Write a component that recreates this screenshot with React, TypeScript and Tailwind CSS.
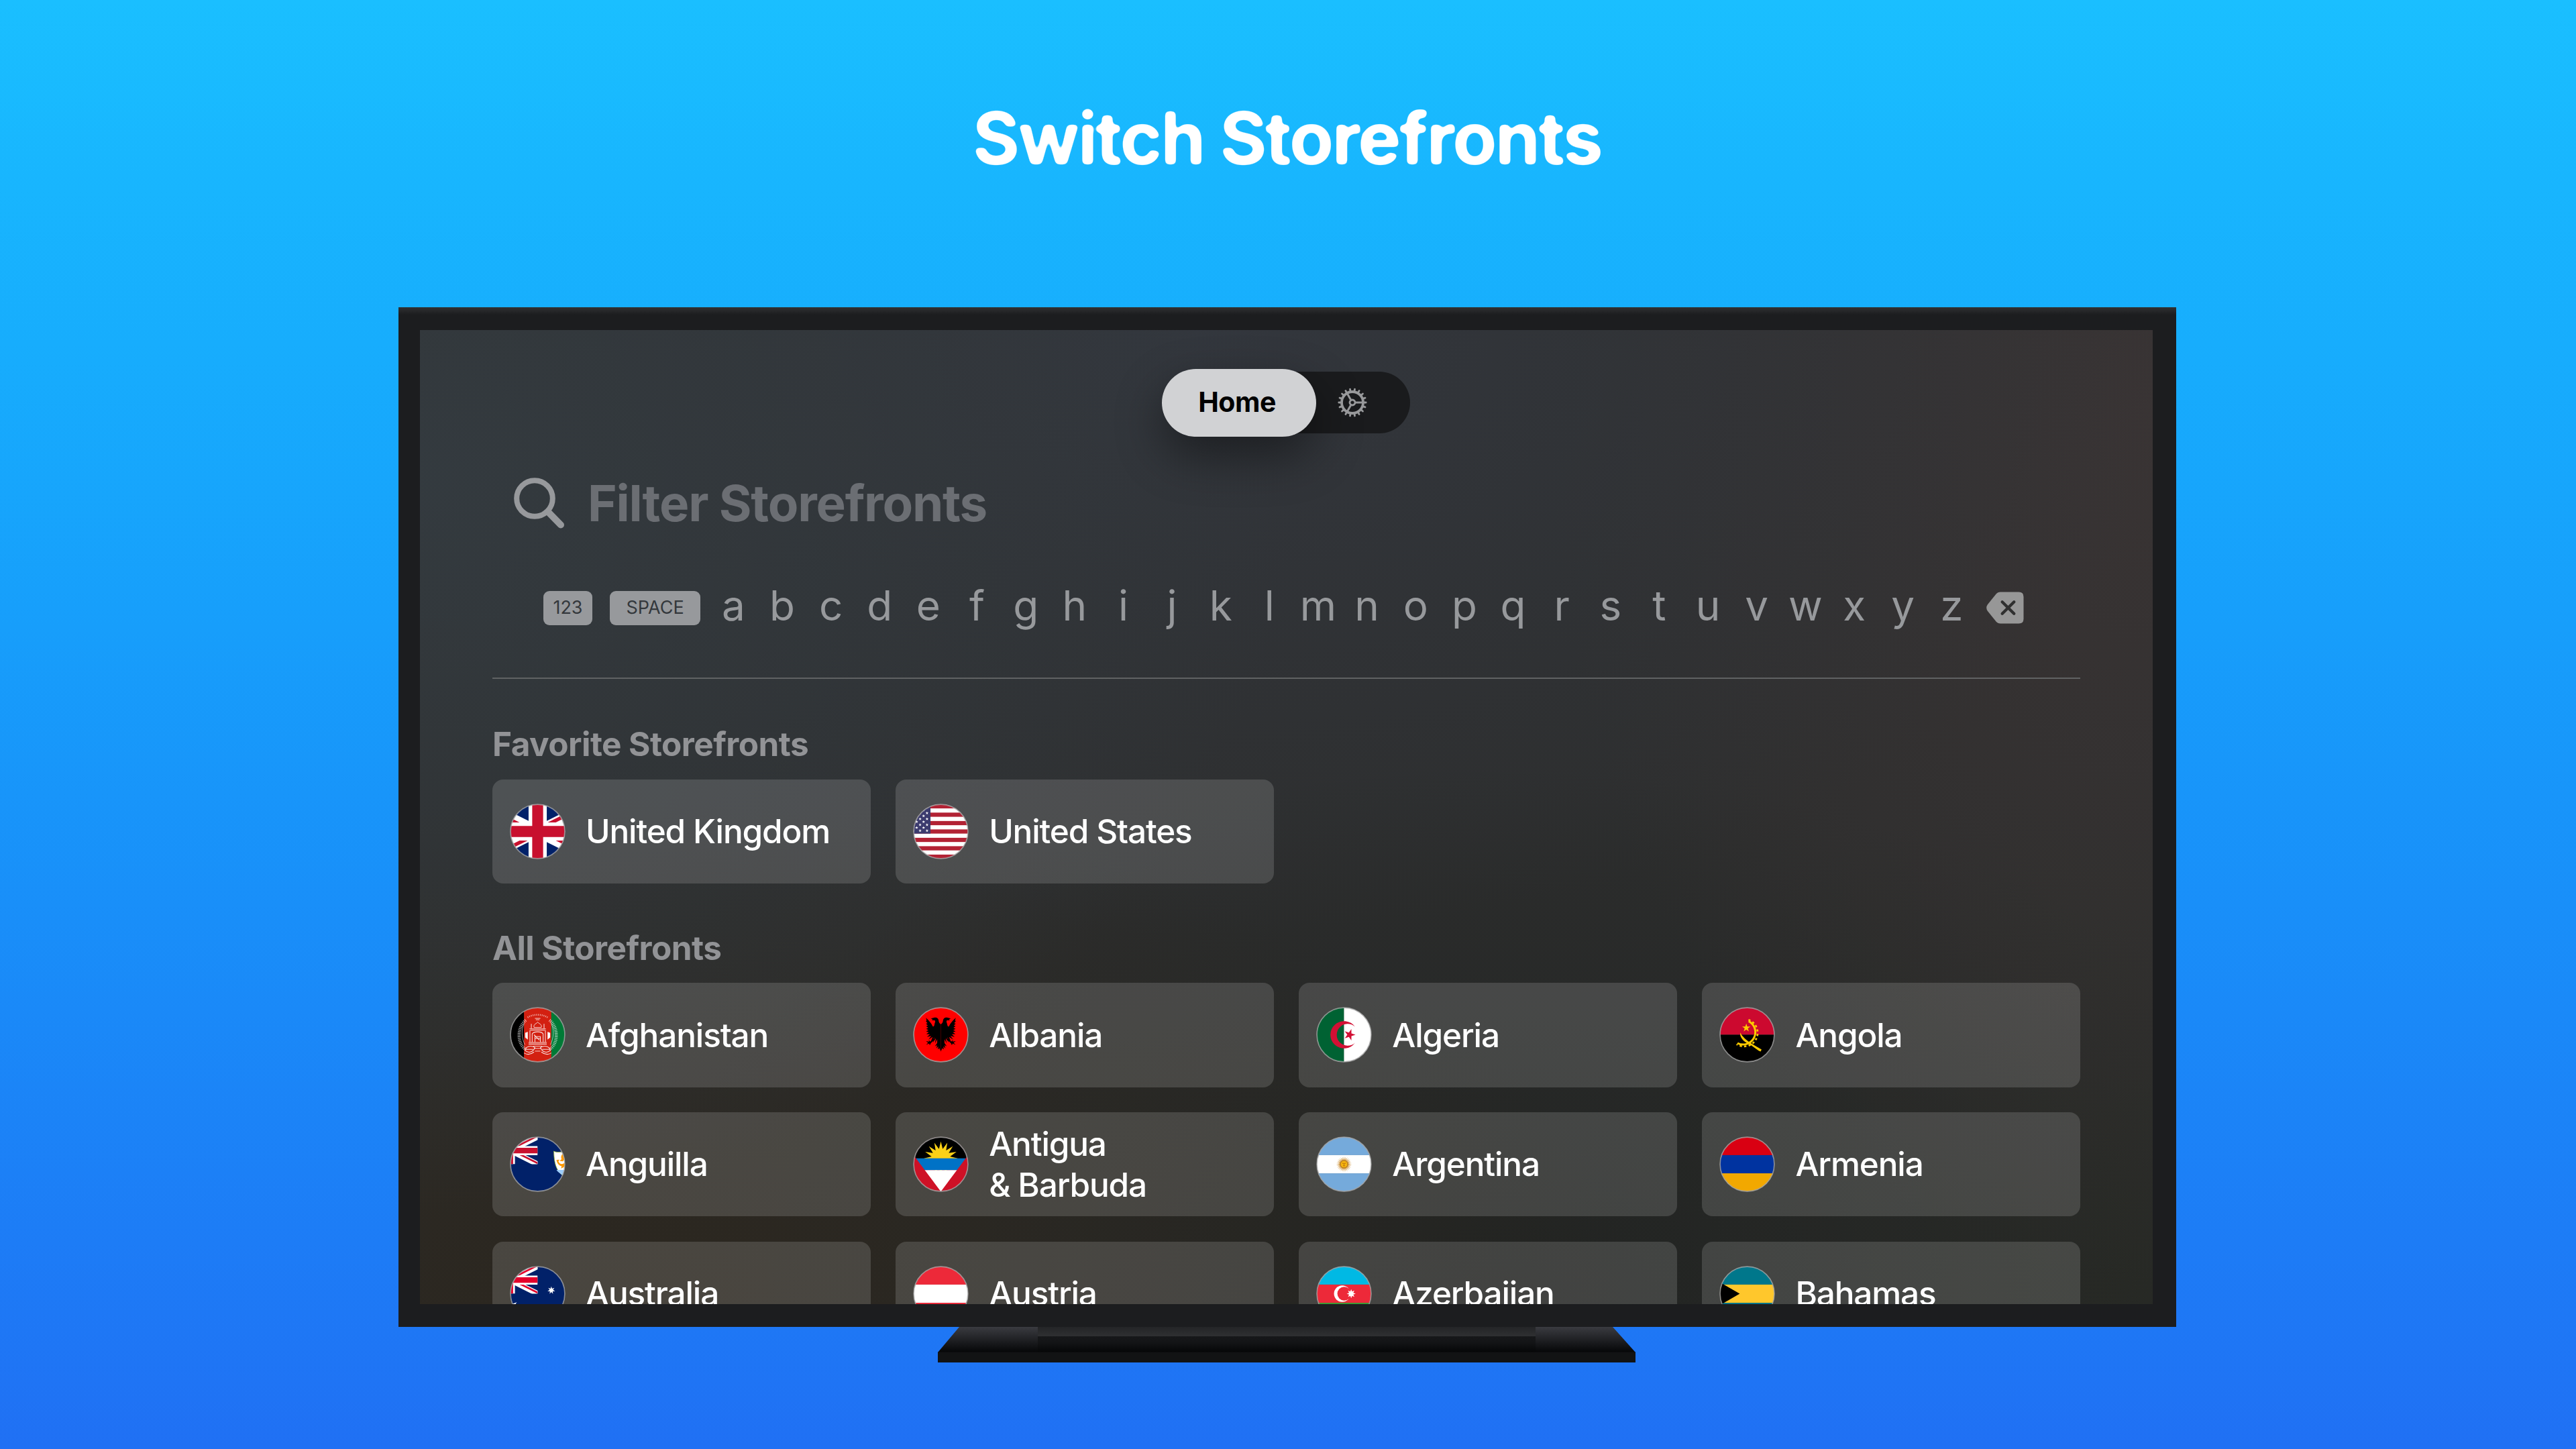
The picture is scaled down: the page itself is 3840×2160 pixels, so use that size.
import React from "react";

/* ---------- geometry helpers ---------- */

function starPoints(cx: number, cy: number, outer: number, inner: number, count: number, startDeg = -90) {
  const pts: string[] = [];
  for (let i = 0; i < count * 2; i++) {
    const r = i % 2 === 0 ? outer : inner;
    const a = ((startDeg + (i * 180) / count) * Math.PI) / 180;
    pts.push(`${(cx + r * Math.cos(a)).toFixed(2)},${(cy + r * Math.sin(a)).toFixed(2)}`);
  }
  return pts.join(" ");
}

const range = (n: number) => Array.from({ length: n }, (_, i) => i);

/* ---------- flags, drawn on a -30..30 square ---------- */

function UnionJack({ x, y, w, id, red = "#C8102E" }: { x: number; y: number; w: number; id: string; red?: string }) {
  return (
    <svg x={x} y={y} width={w} height={w / 2} viewBox="0 0 60 30">
      <clipPath id={id}>
        <path d="M30 15h30v15zv15H0zH0V0zV0h30z" />
      </clipPath>
      <path d="M0 0h60v30H0z" fill="#012169" />
      <path d="M0 0l60 30M60 0L0 30" stroke="#fff" strokeWidth="6" />
      <path d="M0 0l60 30M60 0L0 30" clipPath={`url(#${id})`} stroke={red} strokeWidth="4" />
      <path d="M30 0v30M0 15h60" stroke="#fff" strokeWidth="10" />
      <path d="M30 0v30M0 15h60" stroke={red} strokeWidth="6" />
    </svg>
  );
}

function Bands({ colors }: { colors: [string, string, string] }) {
  return (
    <>
      <rect x="-30" y="-30" width="60" height="20" fill={colors[0]} />
      <rect x="-30" y="-10" width="60" height="20" fill={colors[1]} />
      <rect x="-30" y="10" width="60" height="20" fill={colors[2]} />
    </>
  );
}

function UnitedStates() {
  const s = 60 / 13;
  return (
    <>
      <rect x="-30" y="-30" width="60" height="60" fill="#fff" />
      {range(7).map((i) => (
        <rect key={i} x="-30" y={-30 + i * 2 * s} width="60" height={s} fill="#B22234" />
      ))}
      <rect x="-57" y="-30" width="45.6" height={7 * s} fill="#3C3B6E" />
      {range(9).map((row) =>
        range(6).map((c) => {
          const x = -57 + 3.8 + c * 7.6 + (row % 2 ? 3.8 : 0);
          if (x > -13) return null;
          return <polygon key={`${row}-${c}`} points={starPoints(x, -30 + 3.23 * (row + 1), 1.75, 0.7, 5)} fill="#fff" />;
        })
      )}
    </>
  );
}

function Afghanistan() {
  return (
    <>
      <rect x="-30" y="-30" width="15" height="60" fill="#000" />
      <rect x="-15" y="-30" width="30" height="60" fill="#D32011" />
      <rect x="15" y="-30" width="15" height="60" fill="#007A36" />
      <g fill="none" stroke="#fff" strokeOpacity="0.85">
        {[-1, 1].map((d) => (
          <g key={d} transform={`scale(${d} 1)`}>
            <path d="M13 -16C19 -11 21.5 -3 20 5C19 10 16.5 14 13 16" strokeWidth="3.4" strokeDasharray="0.9 0.9" strokeOpacity="0.6" />
            <path d="M15 -12C18 -6 18 3 14 11" strokeWidth="0.5" />
            <path d="M3 14C8 11 13 13 14 17C10 21 5 19 3 14ZM4 19C8 22 12 22 15 20M5 16h8" strokeWidth="0.8" />
            <path d="M11 -3l2.6 1v5l-2.6 2z" fill="#fff" strokeWidth="0.4" />
          </g>
        ))}
        <path d="M-11 -19C-5 -23 5 -23 11 -19" strokeWidth="1.8" strokeDasharray="0.9 1.1" strokeOpacity="0.6" />
        <path d="M-3 -18h6M-2 -16.5h4" strokeWidth="0.7" />
        <path d="M-4 -8C-5 -12 -1 -12 0 -14C1 -12 5 -12 4 -8Z" strokeWidth="0.7" />
        <path
          d="M-7 -12v5M7 -12v5M-9 -6.5H9M-8 -5H8M-8.5 -5V8M8.5 -5V8M-6 8V-1C-4 -4 4 -4 6 -1V8M-10 8.5H10M-10 10.2H10M-3 8V2H3V8M-4 0l6 6M-3 4h6"
          strokeWidth="0.8"
        />
        <path d="M-5 12.5H5M-4 15H4M-3 18H3" strokeWidth="0.7" />
      </g>
    </>
  );
}

function Albania() {
  return (
    <>
      <rect x="-30" y="-30" width="60" height="60" fill="#FF0000" />
      {[-1, 1].map((d) => (
        <g key={d} transform={`scale(${d} 1)`} fill="#000">
          <path d="M0 -11.5C1.6 -12.4 2.4 -14 2.4 -15.6C2.6 -18.4 5 -19.6 7.4 -18.8L11 -17.8L9 -16.9L9.8 -15.8L6.8 -15.9C5.4 -14.6 6.8 -13.3 7 -11.4C7.2 -9.6 7.8 -8.8 9 -9.2C10 -12 12.5 -15 16.4 -18.6L15.6 -15.6L16.5 -15L14.6 -12.8L16.4 -12.2L14.2 -10.2L16.3 -9.4L13.8 -7.7L16.2 -6.5L13.6 -5.2L16.2 -3.6L13.2 -2.7L16 -0.7L12 -0.6L15.2 2.4L10.6 1.2L13.6 5.4L9 2.4L11 7.2L7.2 3L8.8 8.6L5.4 3.6L6.4 9.4L4 5L4 9L6.5 12.8L4 11.4L5 15L2.8 12.8L3.2 16L1.6 14.8L0 18.4Z" />
          <path d="M8 3.6L11.4 7.6L13.4 5.8L12.8 7.6L16.4 7L14 8.8L16.2 11L12.8 9.6L12.2 11.6L11 9.2L7 5.6Z" />
        </g>
      ))}
    </>
  );
}

function Algeria() {
  return (
    <>
      <rect x="-30" y="-30" width="30" height="60" fill="#006233" />
      <rect x="0" y="-30" width="30" height="60" fill="#fff" />
      <path d="M12.13 -8.83A15 15 0 1 0 12.13 8.83A12 12 0 1 1 12.13 -8.83Z" fill="#D21034" />
      <polygon points={starPoints(6.1, 0, 6.5, 2.5, 5, 0)} fill="#D21034" />
    </>
  );
}

function Angola() {
  return (
    <>
      <rect x="-30" y="-30" width="60" height="30" fill="#CC092F" />
      <rect x="-30" y="0" width="60" height="30" fill="#000" />
      <polygon points={starPoints(-1, -7.6, 4.8, 1.85, 5)} fill="#FFCB00" />
      <path d="M1.6 -14.8A13.4 13.4 0 1 1 -10.6 9.2" fill="none" stroke="#FFCB00" strokeWidth="2.2" />
      <path d="M1.4 -16.4A15 15 0 1 1 -11.6 10.4" fill="none" stroke="#FFCB00" strokeWidth="2" strokeDasharray="2.4 2.5" />
      <path d="M-7.6 -2.4C-5.4 2.2 -1 5.6 2.4 8.2L6.4 10.6L15.8 16.2L14.8 18.4L12.6 17.6L4.4 11.6L1 9.8C-4 7.4 -8.6 2.6 -7.6 -2.4Z" fill="#FFCB00" />
    </>
  );
}

function Anguilla() {
  return (
    <>
      <rect x="-30" y="-30" width="60" height="60" fill="#012169" />
      <UnionJack x={-60} y={-30} w={60} id="uj-anguilla" />
      <path d="M17.8 -14.4C20 -13 24 -12.8 30 -14.4V14C22 9 18 2 17.8 -14.4Z" fill="#fff" stroke="#A8C23A" strokeWidth="0.6" />
      <path d="M20.6 6.2H30V13.6C25.6 11 22.6 9 20.6 6.2Z" fill="#9CCDFB" />
      <path d="M28.6 -12.5C25.4 -10 25.6 -7.6 26.2 -5.6L24.2 -3.6L27.6 -3.2L30 -6V-11Z" fill="#FF9900" />
      <path d="M20.6 -4.8C21.4 -1 23 1.4 26.4 2.2L25.6 4.6L28.6 3.4L30 1V-2C27.5 1 24 -0.2 22.8 -3.2L24 -5Z" fill="#FF9900" />
    </>
  );
}

function Antigua() {
  return (
    <>
      <rect x="-30" y="-30" width="60" height="60" fill="#CE1126" />
      <clipPath id="antigua-v">
        <path d="M-45 -30H45L0 30Z" />
      </clipPath>
      <g clipPath="url(#antigua-v)">
        <rect x="-45" y="-30" width="90" height="24" fill="#000" />
        <polygon points={starPoints(0, -6.5, 18.6, 10.4, 16)} fill="#FCD116" />
        <rect x="-45" y="-6.5" width="90" height="13" fill="#0072C6" />
        <rect x="-45" y="6.5" width="90" height="24" fill="#fff" />
      </g>
    </>
  );
}

function Argentina() {
  return (
    <>
      <Bands colors={["#75AADB", "#fff", "#75AADB"]} />
      <polygon points={starPoints(0, 0, 8.6, 4.6, 28)} fill="#D29B48" />
      <circle r="4" fill="#F6B40E" stroke="#A9701F" strokeWidth="0.7" />
      <path d="M-1.8 -1h1.2M0.6 -1h1.2M0 -0.8v1.4M-1 1.7h2" stroke="#85340A" strokeWidth="0.5" />
    </>
  );
}

function Australia() {
  return (
    <>
      <rect x="-30" y="-30" width="60" height="60" fill="#012169" />
      <UnionJack x={-60} y={-30} w={60} id="uj-australia" red="#E4002B" />
      <polygon points={starPoints(15, -3.75, 4.3, 1.9, 7)} fill="#fff" />
      <polygon points={starPoints(-30, 15, 9, 4, 7)} fill="#fff" />
    </>
  );
}

function Azerbaijan() {
  return (
    <>
      <Bands colors={["#00B9E4", "#ED2939", "#3F9C35"]} />
      <circle cx="-2" r="9" fill="#fff" />
      <circle cx="0.2" r="7.5" fill="#ED2939" />
      <polygon points={starPoints(7.9, 0, 4.9, 2.5, 8)} fill="#fff" />
    </>
  );
}

function Bahamas() {
  return (
    <>
      <Bands colors={["#00778B", "#FFC72C", "#00778B"]} />
      <path d="M-60 -30L-8.2 0L-60 30Z" fill="#000" />
    </>
  );
}

const flags: Record<string, React.ReactNode> = {
  gb: <UnionJack x={-60} y={-30} w={120} id="uj-gb" />,
  us: <UnitedStates />,
  af: <Afghanistan />,
  al: <Albania />,
  dz: <Algeria />,
  ao: <Angola />,
  ai: <Anguilla />,
  ag: <Antigua />,
  ar: <Argentina />,
  am: <Bands colors={["#D90012", "#0033A0", "#F2A800"]} />,
  au: <Australia />,
  at: <Bands colors={["#ED2939", "#fff", "#ED2939"]} />,
  az: <Azerbaijan />,
  bs: <Bahamas />,
};

function Flag({ code }: { code: string }) {
  return (
    <svg viewBox="-30.6 -30.6 61.2 61.2" className="size-[83px] shrink-0">
      <clipPath id={`round-${code}`}>
        <circle r="30" />
      </clipPath>
      <g clipPath={`url(#round-${code})`}>{flags[code]}</g>
      <circle r="29.8" fill="none" stroke="#a5a5a5" strokeOpacity="0.8" strokeWidth="1.2" />
    </svg>
  );
}

/* ---------- icons ---------- */

function GearIcon() {
  return (
    <svg viewBox="-22 -22 44 44" className="size-[44px]" fill="none" stroke="#98999b">
      <circle r="16" strokeWidth="3.8" />
      {range(18).map((i) => (
        <path key={i} d="M17 0H20.2" strokeWidth="2.8" strokeLinecap="round" transform={`rotate(${i * 20})`} />
      ))}
      <circle r="4" strokeWidth="2.8" />
      {[0, 120, 240].map((a) => (
        <path key={a} d="M5 0H15" strokeWidth="3" transform={`rotate(${a})`} />
      ))}
    </svg>
  );
}

function SearchIcon() {
  return (
    <svg viewBox="0 0 76 76" className="size-[76px]" fill="none" stroke="#97999c">
      <circle cx="31" cy="31" r="26.8" strokeWidth="8" />
      <path d="M51 51L70 70.5" strokeWidth="10" strokeLinecap="round" />
    </svg>
  );
}

function DeleteIcon() {
  return (
    <svg viewBox="0 0 56 48" className="h-[48px] w-[56px]">
      <path
        d="M21 0.5H48.5Q55.5 0.5 55.5 7.5V40.5Q55.5 47.5 48.5 47.5H21Q17 47.5 14.5 44.5L2 29Q-1.6 24 2 19L14.5 3.5Q17 0.5 21 0.5Z"
        fill="#979797"
      />
      <path d="M23.7 15.3L41.3 32.7M41.3 15.3L23.7 32.7" stroke="#303030" strokeWidth="4.4" strokeLinecap="round" />
    </svg>
  );
}

/* ---------- page parts ---------- */

function Card({ code, name }: { code: string; name: React.ReactNode }) {
  return (
    <div className="flex h-[155.5px] items-center gap-[30px] rounded-[16px] bg-white/[0.145] pl-[26px]">
      <Flag code={code} />
      <div className="pt-px text-[49.5px] leading-[61.5px] font-medium tracking-[-1.15px] whitespace-nowrap text-white">{name}</div>
    </div>
  );
}

function SectionTitle({ children }: { children: React.ReactNode }) {
  return (
    <h2 className="h-[62px] text-[49.5px] leading-[62px] font-bold tracking-[-0.55px] whitespace-nowrap text-[#929396]">{children}</h2>
  );
}

const favorites = [
  { code: "gb", name: "United Kingdom" },
  { code: "us", name: "United States" },
];

const storefronts: { code: string; name: React.ReactNode }[] = [
  { code: "af", name: "Afghanistan" },
  { code: "al", name: "Albania" },
  { code: "dz", name: "Algeria" },
  { code: "ao", name: "Angola" },
  { code: "ai", name: "Anguilla" },
  {
    code: "ag",
    name: (
      <>
        Antigua
        <br />
        &amp; Barbuda
      </>
    ),
  },
  { code: "ar", name: "Argentina" },
  { code: "am", name: "Armenia" },
  { code: "au", name: "Australia" },
  { code: "at", name: "Austria" },
  { code: "az", name: "Azerbaijan" },
  { code: "bs", name: "Bahamas" },
];

function Screen() {
  return (
    <div
      className="h-[1452px] w-[2583px] overflow-hidden bg-[#2d2e2e] px-[108px] pt-[62px]"
      style={{
        backgroundImage:
          "radial-gradient(1300px 1100px at 0% 15%, rgba(52,59,64,0.95), rgba(52,59,64,0)), radial-gradient(1500px 900px at 45% 0%, rgba(51,55,62,0.95), rgba(51,55,62,0)), radial-gradient(900px 1300px at 100% 8%, rgba(58,52,52,0.95), rgba(58,52,52,0)), radial-gradient(1500px 750px at 12% 100%, rgba(43,38,30,1), rgba(43,38,30,0)), radial-gradient(1300px 800px at 62% 100%, rgba(33,35,33,1), rgba(33,35,33,0)), radial-gradient(900px 800px at 100% 100%, rgba(41,43,38,1), rgba(41,43,38,0))",
      }}
    >
      <nav className="flex justify-center">
        <div className="flex h-[92px] w-[368px] items-center rounded-full bg-[#1a1b1d]">
          <div className="-ml-[2px] flex h-[101px] w-[230px] shrink-0 items-center justify-center rounded-full bg-[#d1d2d4] pr-[5px] text-[41px] font-bold tracking-[-0.5px] text-black shadow-[0_28px_70px_rgba(0,0,0,0.42)]">
            Home
          </div>
          <div className="ml-[32px]">
            <GearIcon />
          </div>
        </div>
      </nav>

      <div className="mt-[66px] flex items-center gap-[34px] pl-[32px]">
        <SearchIcon />
        <div className="text-[74.5px] leading-[76px] font-bold tracking-[-1.2px] whitespace-nowrap text-[#6b6e73]">Filter Storefronts</div>
      </div>

      <div className="mt-[84px] flex h-[68px] items-center pl-[76px] text-[#97999c]">
        <div className="flex h-[51px] w-[73px] items-center justify-center rounded-[9px] bg-[#97999c] text-[27px] text-[#34383c]">123</div>
        <div className="ml-[26px] flex h-[51px] w-[135px] items-center justify-center rounded-[9px] bg-[#97999c] text-[27px] text-[#34383c]">
          SPACE
        </div>
        <div className="ml-[13px] flex pb-[6px] text-[62px] leading-[68px]">
          {"abcdefghijklmnopqrstuvwxyz".split("").map((ch) => (
            <span key={ch} className="w-[72.65px] text-center">
              {ch}
            </span>
          ))}
        </div>
        <div className="ml-[15px]">
          <DeleteIcon />
        </div>
      </div>

      <div className="mt-[70px] h-[2px] bg-[#606263]" />

      <div className="mt-[66px]">
        <SectionTitle>Favorite Storefronts</SectionTitle>
        <div className="mt-[21.5px] grid grid-cols-4 gap-[37.5px]">
          {favorites.map((s) => (
            <Card key={s.code} {...s} />
          ))}
        </div>
      </div>

      <div className="mt-[65px]">
        <SectionTitle>All Storefronts</SectionTitle>
        <div className="mt-[21px] grid grid-cols-4 gap-x-[37.5px] gap-y-[37.3px]">
          {storefronts.map((s) => (
            <Card key={s.code} {...s} />
          ))}
        </div>
      </div>
    </div>
  );
}

function Stand() {
  return (
    <svg viewBox="0 0 1040 53" className="h-[53px] w-[1040px]">
      <defs>
        <linearGradient id="side" x1="0" y1="0" x2="0" y2="1">
          <stop offset="0" stopColor="#3a3b40" />
          <stop offset="1" stopColor="#050607" />
        </linearGradient>
        <linearGradient id="neck" x1="0" y1="0" x2="0" y2="1">
          <stop offset="0" stopColor="#242527" />
          <stop offset="1" stopColor="#2f3032" />
        </linearGradient>
        <linearGradient id="base" x1="0" y1="0" x2="0" y2="1">
          <stop offset="0" stopColor="#17181a" />
          <stop offset="0.4" stopColor="#131416" />
          <stop offset="1" stopColor="#050607" />
        </linearGradient>
      </defs>
      <path d="M32 0H1006L1040 38H0Z" fill="url(#side)" />
      <rect x="149" y="0" width="742" height="14" fill="url(#neck)" />
      <rect x="149" y="14" width="742" height="24" fill="url(#base)" />
      <rect x="0" y="37.5" width="1040" height="15.5" fill="#121314" />
    </svg>
  );
}

export default function App() {
  return (
    <div className="flex h-[2160px] w-[3840px] flex-col overflow-hidden bg-linear-to-b from-[#1abfff] to-[#2070f4] font-['Inter',sans-serif]">
      <svg className="absolute h-0 w-0" aria-hidden="true">
        <filter id="soft-corners" x="-5%" y="-5%" width="110%" height="110%" colorInterpolationFilters="sRGB">
          <feGaussianBlur stdDeviation="3.4" />
          <feComponentTransfer>
            <feFuncA type="linear" slope="7" intercept="-2.9" />
          </feComponentTransfer>
        </filter>
      </svg>
      <div className="flex h-[458px] justify-center pt-[136px] pr-[3px]">
        <h1 className="h-[140px] text-[108px] leading-[140px] font-bold tracking-[-2.6px] whitespace-nowrap text-white [filter:url(#soft-corners)]">
          Switch Storefronts
        </h1>
      </div>
      <div className="ml-[594px] h-[1520px] w-[2650px] bg-[#1c1d1f] bg-[linear-gradient(to_bottom,#303133_0,#1c1d1f_11px)] pt-[34px] pl-[32px]">
        <Screen />
      </div>
      <div className="ml-[1398px]">
        <Stand />
      </div>
    </div>
  );
}
